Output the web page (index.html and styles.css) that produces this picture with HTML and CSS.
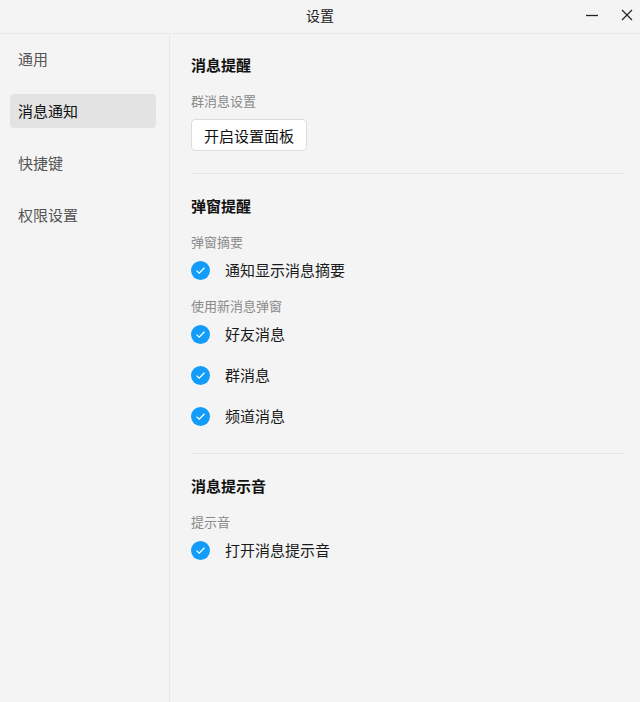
FILE: index.html
```html
<!DOCTYPE html>
<html lang="zh-CN">
<head>
<meta charset="utf-8">
<title>设置</title>
<link rel="stylesheet" href="styles.css">
</head>
<body>
<div class="window">
  <header class="titlebar">
    <div class="title">设置</div>
    <div class="controls">
      <svg class="ctl" width="14" height="14" viewBox="0 0 14 14"><path d="M1 7.5H13" stroke="#222" stroke-width="1.3"/></svg>
      <svg class="ctl" width="14" height="14" viewBox="0 0 14 14"><path d="M2 2L12 12M12 2L2 12" stroke="#222" stroke-width="1.2"/></svg>
    </div>
  </header>
  <div class="main">
    <nav class="sidebar">
      <div class="nav-item">通用</div>
      <div class="nav-item active">消息通知</div>
      <div class="nav-item">快捷键</div>
      <div class="nav-item">权限设置</div>
    </nav>
    <section class="content">
      <div class="section">
        <h2 class="heading">消息提醒</h2>
        <div class="label">群消息设置</div>
        <button class="btn">开启设置面板</button>
      </div>
      <div class="divider"></div>
      <div class="section">
        <h2 class="heading">弹窗提醒</h2>
        <div class="label">弹窗摘要</div>
        <div class="checks">
          <div class="check"><span class="box"><svg width="11" height="9" viewBox="0 0 11 9"><path d="M1.5 4.6L4.2 7.2L9.5 1.8" fill="none" stroke="#fff" stroke-width="1.3"/></svg></span><span class="ctext">通知显示消息摘要</span></div>
        </div>
        <div class="label label-next">使用新消息弹窗</div>
        <div class="checks">
          <div class="check"><span class="box"><svg width="11" height="9" viewBox="0 0 11 9"><path d="M1.5 4.6L4.2 7.2L9.5 1.8" fill="none" stroke="#fff" stroke-width="1.3"/></svg></span><span class="ctext">好友消息</span></div>
          <div class="check"><span class="box"><svg width="11" height="9" viewBox="0 0 11 9"><path d="M1.5 4.6L4.2 7.2L9.5 1.8" fill="none" stroke="#fff" stroke-width="1.3"/></svg></span><span class="ctext">群消息</span></div>
          <div class="check"><span class="box"><svg width="11" height="9" viewBox="0 0 11 9"><path d="M1.5 4.6L4.2 7.2L9.5 1.8" fill="none" stroke="#fff" stroke-width="1.3"/></svg></span><span class="ctext">频道消息</span></div>
        </div>
      </div>
      <div class="divider divider-2"></div>
      <div class="section">
        <h2 class="heading">消息提示音</h2>
        <div class="label">提示音</div>
        <div class="checks">
          <div class="check"><span class="box"><svg width="11" height="9" viewBox="0 0 11 9"><path d="M1.5 4.6L4.2 7.2L9.5 1.8" fill="none" stroke="#fff" stroke-width="1.3"/></svg></span><span class="ctext">打开消息提示音</span></div>
        </div>
      </div>
    </section>
  </div>
</div>
</body>
</html>
```
FILE: styles.css
```css
* { box-sizing: border-box; }
html, body {
  margin: 0;
  padding: 0;
  width: 640px;
  height: 702px;
  overflow: hidden;
  background: #f4f4f4;
  font-family: "Noto Sans CJK SC", "Noto Sans", sans-serif;
  color: #1a1a1a;
}
.window {
  display: flex;
  flex-direction: column;
  height: 702px;
}
.titlebar {
  position: relative;
  height: 34px;
  flex: none;
  border-bottom: 1px solid #e8e8e8;
  display: flex;
  align-items: center;
  justify-content: center;
}
.title {
  font-size: 14px;
  line-height: 20px;
  color: #222;
  margin-top: -3px;
}
.controls {
  position: absolute;
  right: 6px;
  top: 8px;
  display: flex;
  gap: 21px;
}
.ctl { display: block; }
.main {
  flex: 1;
  display: flex;
  min-height: 0;
}
.sidebar {
  width: 170px;
  flex: none;
  border-right: 1px solid #e8e8e8;
  padding: 8px 13px 0 10px;
  display: flex;
  flex-direction: column;
  gap: 18px;
}
.nav-item {
  height: 34px;
  line-height: 34px;
  padding-left: 8px;
  font-size: 15px;
  color: #555;
  border-radius: 4px;
}
.nav-item.active {
  background: #e3e3e3;
  color: #111;
}
.content {
  flex: 1;
  padding: 20px 15px 0 21px;
}
.section {
  display: flex;
  flex-direction: column;
  align-items: flex-start;
}
.heading {
  margin: 0;
  font-size: 15px;
  line-height: 22px;
  font-weight: 700;
  color: #111;
}
.label {
  margin-top: 15px;
  font-size: 13px;
  line-height: 20px;
  color: #8a8a8a;
}
.label-next { margin-top: 12px; }
.btn {
  margin-top: 8px;
  height: 32px;
  padding: 0 12px;
  font-family: inherit;
  font-size: 15px;
  color: #111;
  background: #fff;
  border: 1px solid #dcdcdc;
  border-radius: 4px;
}
.divider {
  height: 1px;
  background: #e6e6e6;
  margin: 22px 0 21px;
}
.divider-2 { margin-top: 23px; }
.checks {
  margin-top: 4px;
  display: flex;
  flex-direction: column;
  gap: 13px;
}
.check {
  height: 28px;
  display: flex;
  align-items: center;
}
.box {
  width: 19px;
  height: 19px;
  border-radius: 50%;
  background: #119cfa;
  display: flex;
  align-items: center;
  justify-content: center;
}
.box svg { display: block; }
.ctext {
  margin-left: 15px;
  font-size: 15px;
  line-height: 22px;
  color: #1a1a1a;
}
```
